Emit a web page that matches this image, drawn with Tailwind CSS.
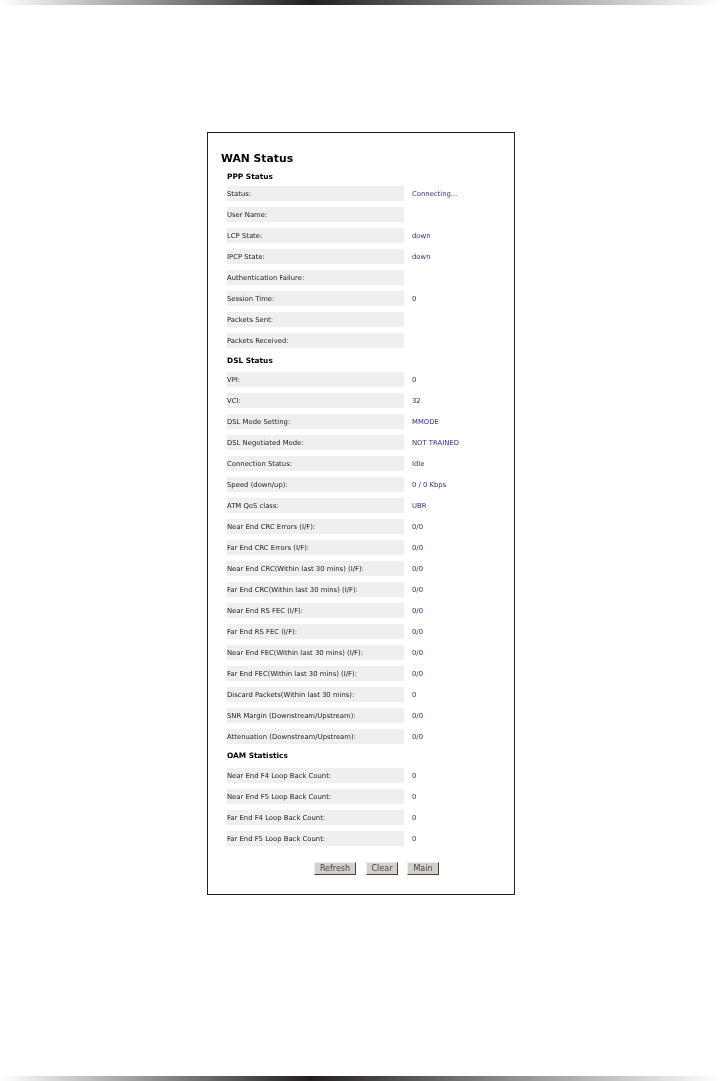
<!DOCTYPE html>
<html lang="en">
<head>
  <meta charset="UTF-8">
  <title>WAN Status</title>
  <script src="https://cdn.jsdelivr.net/npm/@tailwindcss/browser@4"></script>
</head>
<body class="bg-white font-['DejaVu_Sans',sans-serif] h-[1081px] w-[720px] overflow-hidden flex flex-col">
  <div class="h-[5px] shrink-0 bg-[linear-gradient(to_right,#ffffff_0%,#231f20_43%,#ffffff_100%)]"></div>

  <main class="flex-1 pt-[127px] pl-[207px] blur-[0.3px]">
    <div class="w-[308px] h-[763px] border border-[#222] pl-[13px] pt-[19px] flex flex-col">
      <h1 class="text-[10.8px] leading-[14px] font-bold text-black">WAN Status</h1>

      <div class="pl-[6px] flex flex-col">
        <h2 class="text-[7.4px] leading-[10px] font-bold text-black mt-[6px] mb-[4px]">PPP Status</h2>
        <div class="flex flex-col gap-[6px] text-[6.85px] leading-[17px]">
          <div class="flex h-[15px]"><div class="w-[177px] bg-[#efefef] text-[#222]">Status:</div><div class="ml-[8px] text-[#2e2e8c]">Connecting...</div></div>
          <div class="flex h-[15px]"><div class="w-[177px] bg-[#efefef] text-[#222]">User Name:</div></div>
          <div class="flex h-[15px]"><div class="w-[177px] bg-[#efefef] text-[#222]">LCP State:</div><div class="ml-[8px] text-[#2e2e8c]">down</div></div>
          <div class="flex h-[15px]"><div class="w-[177px] bg-[#efefef] text-[#222]">IPCP State:</div><div class="ml-[8px] text-[#2e2e8c]">down</div></div>
          <div class="flex h-[15px]"><div class="w-[177px] bg-[#efefef] text-[#222]">Authentication Failure:</div></div>
          <div class="flex h-[15px]"><div class="w-[177px] bg-[#efefef] text-[#222]">Session Time:</div><div class="ml-[8px] text-[#2e2e8c]">0</div></div>
          <div class="flex h-[15px]"><div class="w-[177px] bg-[#efefef] text-[#222]">Packets Sent:</div></div>
          <div class="flex h-[15px]"><div class="w-[177px] bg-[#efefef] text-[#222]">Packets Received:</div></div>
        </div>

        <h2 class="text-[7.4px] leading-[10px] font-bold text-black mt-[8px] mb-[6px]">DSL Status</h2>
        <div class="flex flex-col gap-[6px] text-[6.85px] leading-[17px]">
          <div class="flex h-[15px]"><div class="w-[177px] bg-[#efefef] text-[#222]">VPI:</div><div class="ml-[8px] text-[#2e2e8c]">0</div></div>
          <div class="flex h-[15px]"><div class="w-[177px] bg-[#efefef] text-[#222]">VCI:</div><div class="ml-[8px] text-[#2e2e8c]">32</div></div>
          <div class="flex h-[15px]"><div class="w-[177px] bg-[#efefef] text-[#222]">DSL Mode Setting:</div><div class="ml-[8px] text-[#2e2e8c]">MMODE</div></div>
          <div class="flex h-[15px]"><div class="w-[177px] bg-[#efefef] text-[#222]">DSL Negotiated Mode:</div><div class="ml-[8px] text-[#2e2e8c]">NOT TRAINED</div></div>
          <div class="flex h-[15px]"><div class="w-[177px] bg-[#efefef] text-[#222]">Connection Status:</div><div class="ml-[8px] text-[#2e2e8c]">Idle</div></div>
          <div class="flex h-[15px]"><div class="w-[177px] bg-[#efefef] text-[#222]">Speed (down/up):</div><div class="ml-[8px] text-[#2e2e8c]">0 / 0 Kbps</div></div>
          <div class="flex h-[15px]"><div class="w-[177px] bg-[#efefef] text-[#222]">ATM QoS class:</div><div class="ml-[8px] text-[#2e2e8c]">UBR</div></div>
          <div class="flex h-[15px]"><div class="w-[177px] bg-[#efefef] text-[#222]">Near End CRC Errors (I/F):</div><div class="ml-[8px] text-[#2e2e8c]">0/0</div></div>
          <div class="flex h-[15px]"><div class="w-[177px] bg-[#efefef] text-[#222]">Far End CRC Errors (I/F):</div><div class="ml-[8px] text-[#2e2e8c]">0/0</div></div>
          <div class="flex h-[15px]"><div class="w-[177px] bg-[#efefef] text-[#222]">Near End CRC(Within last 30 mins) (I/F):</div><div class="ml-[8px] text-[#2e2e8c]">0/0</div></div>
          <div class="flex h-[15px]"><div class="w-[177px] bg-[#efefef] text-[#222]">Far End CRC(Within last 30 mins) (I/F):</div><div class="ml-[8px] text-[#2e2e8c]">0/0</div></div>
          <div class="flex h-[15px]"><div class="w-[177px] bg-[#efefef] text-[#222]">Near End RS FEC (I/F):</div><div class="ml-[8px] text-[#2e2e8c]">0/0</div></div>
          <div class="flex h-[15px]"><div class="w-[177px] bg-[#efefef] text-[#222]">Far End RS FEC (I/F):</div><div class="ml-[8px] text-[#2e2e8c]">0/0</div></div>
          <div class="flex h-[15px]"><div class="w-[177px] bg-[#efefef] text-[#222]">Near End FEC(Within last 30 mins) (I/F):</div><div class="ml-[8px] text-[#2e2e8c]">0/0</div></div>
          <div class="flex h-[15px]"><div class="w-[177px] bg-[#efefef] text-[#222]">Far End FEC(Within last 30 mins) (I/F):</div><div class="ml-[8px] text-[#2e2e8c]">0/0</div></div>
          <div class="flex h-[15px]"><div class="w-[177px] bg-[#efefef] text-[#222]">Discard Packets(Within last 30 mins):</div><div class="ml-[8px] text-[#2e2e8c]">0</div></div>
          <div class="flex h-[15px]"><div class="w-[177px] bg-[#efefef] text-[#222]">SNR Margin (Downstream/Upstream):</div><div class="ml-[8px] text-[#2e2e8c]">0/0</div></div>
          <div class="flex h-[15px]"><div class="w-[177px] bg-[#efefef] text-[#222]">Attenuation (Downstream/Upstream):</div><div class="ml-[8px] text-[#2e2e8c]">0/0</div></div>
        </div>

        <h2 class="text-[7.4px] leading-[10px] font-bold text-black mt-[7px] mb-[7px]">OAM Statistics</h2>
        <div class="flex flex-col gap-[6px] text-[6.85px] leading-[17px]">
          <div class="flex h-[15px]"><div class="w-[177px] bg-[#efefef] text-[#222]">Near End F4 Loop Back Count:</div><div class="ml-[8px] text-[#2e2e8c]">0</div></div>
          <div class="flex h-[15px]"><div class="w-[177px] bg-[#efefef] text-[#222]">Near End F5 Loop Back Count:</div><div class="ml-[8px] text-[#2e2e8c]">0</div></div>
          <div class="flex h-[15px]"><div class="w-[177px] bg-[#efefef] text-[#222]">Far End F4 Loop Back Count:</div><div class="ml-[8px] text-[#2e2e8c]">0</div></div>
          <div class="flex h-[15px]"><div class="w-[177px] bg-[#efefef] text-[#222]">Far End F5 Loop Back Count:</div><div class="ml-[8px] text-[#2e2e8c]">0</div></div>
        </div>

        <div class="flex mt-[16px] ml-[87px] text-[8px]">
          <button class="w-[42px] h-[13px] leading-[11px] bg-[#d4d0c8] text-[#444] border border-[#eee] border-r-[#444] border-b-[#444]">Refresh</button>
          <button class="ml-[10px] w-[32px] h-[13px] leading-[11px] bg-[#d4d0c8] text-[#444] border border-[#eee] border-r-[#444] border-b-[#444]">Clear</button>
          <button class="ml-[9px] w-[32px] h-[13px] leading-[11px] bg-[#d4d0c8] text-[#444] border border-[#eee] border-r-[#444] border-b-[#444]">Main</button>
        </div>
      </div>
    </div>
  </main>

  <div class="h-[5px] shrink-0 bg-[linear-gradient(to_right,#ffffff_0%,#231f20_43%,#ffffff_100%)]"></div>
</body>
</html>
